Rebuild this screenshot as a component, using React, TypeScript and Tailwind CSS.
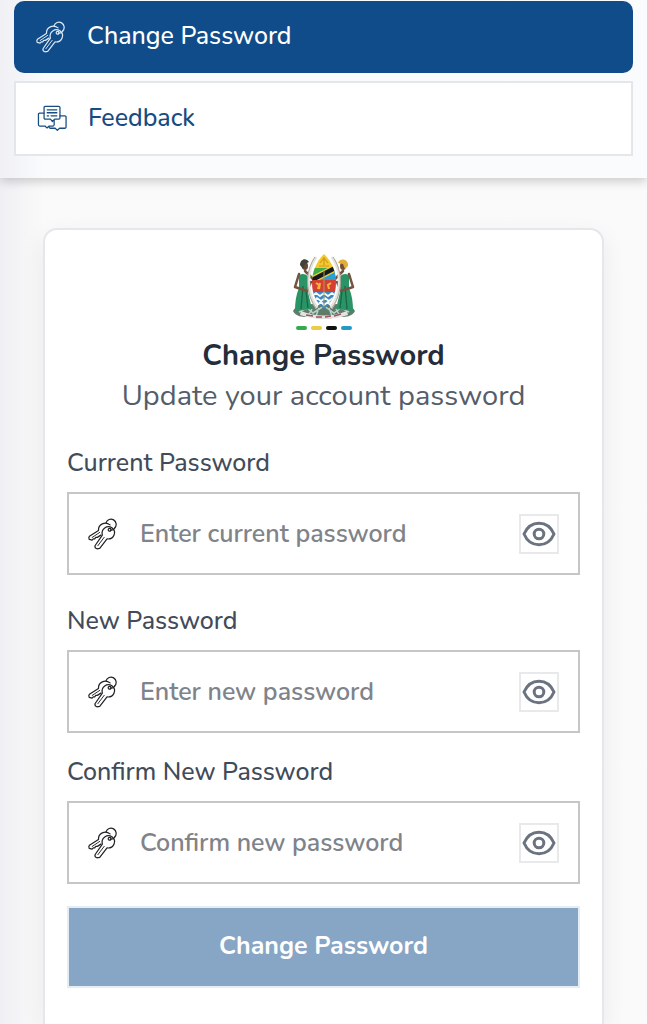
import { useState } from "react";

function KeysIcon({ className }: { className: string }) {
  return (
    <svg viewBox="0 0 34 34" className={className} fill="none" stroke="currentColor" strokeWidth="1.3" strokeLinecap="round" strokeLinejoin="round" aria-hidden="true">
      <path d="M20.200 5.200a5.500 5.500 0 1 1 9.200 5.400" />
      <path d="M24.500 7.300c-5.300-4-12.600-.8-12.300 6L2.600 19.400c-.8.800-.8 2.200-.2 3.400l3 .7 1.300-1.400 1.500.1 1.100-1.500 1.700-.1 3.700-2.400" />
      <path d="M13.500 15.300 5.500 20.700" strokeWidth="1" />
      <path d="M16.300 18.300c-1.700-6.600 5-11.300 10.500-7.700 5.300 4.500 1.300 12.600-5.500 11.600l-7.800 10-3 .5c-1.500-.5-2.300-1.600-2-3.200z" />
      <path d="m18.300 20.500-6.800 9" strokeWidth="1" />
      <path d="M22.500 12.300c.3-1.400 2.300-1.700 3-.5.6 1.500-.7 2.600-2 2.100-.7-.3-1.100-.9-1-1.600zM25 12.800c2.300.3 3.700-.7 4.300-2" />
    </svg>
  );
}

function FeedbackIcon() {
  return (
    <svg viewBox="0 0 32 28" className="w-[31px] shrink-0" fill="none" stroke="currentColor" strokeWidth="1.300" strokeLinejoin="round" strokeLinecap="round" aria-hidden="true">
      <path d="M8.500 1.500h14a1.200 1.200 0 0 1 1.200 1.200v10.600a1.200 1.200 0 0 1-1.200 1.200h-4.300L16 17l-2.200-2.500H8.500a1.200 1.200 0 0 1-1.200-1.200V2.700a1.200 1.200 0 0 1 1.200-1.200z" />
      <path d="M7.300 8.300H2.700a1.200 1.200 0 0 0-1.200 1.200v11a1.200 1.200 0 0 0 1.200 1.200h5.500l2.200 2 2.100-2h4a1.200 1.200 0 0 0 1.200-1.200V16" />
      <path d="M23.700 11.300h5.100a1.200 1.200 0 0 1 1.200 1.200v10.300a1.200 1.200 0 0 1-1.200 1.200h-5.500L21 26.200 18.800 24h-5a1.200 1.200 0 0 1-1.200-1.200" />
      <path d="M10.500 5h10M10.500 8h10M10.500 11.200h1.500M14.500 11.200h6" />
    </svg>
  );
}

function EyeIcon() {
  return (
    <svg viewBox="0 0 34 26" className="w-[34px] shrink-0" fill="none" stroke="currentColor" strokeWidth="3" aria-hidden="true">
      <path d="M2 13C5 6 10.500 2.200 17 2.200S29 6 32 13c-3 7-8.500 10.800-15 10.800S5 20 2 13z" strokeLinejoin="round" />
      <circle cx="17" cy="13" r="4.800" />
    </svg>
  );
}

function Emblem() {
  return (
    <svg viewBox="0 0 62 66" className="h-[66px] w-[62px]" role="img" aria-label="Coat of arms">
      <defs>
        <clipPath id="shield">
          <path d="M31 0C23 8 19 18 19 29c0 12 5 20 12 26 7-6 12-14 12-26C43 18 39 8 31 0z" />
        </clipPath>
      </defs>
      <path d="M0 57c3-6 10-7 14-4 4-5 7-3 10 0 3-5 11-5 14 0 3-3 6-5 10 0 4-3 11-2 14 4-3 6-12 7-17 5-9 4-19 4-28 0-5 2-14 1-17-5z" fill="#5e7c69" />
      <path d="m6 58 8-4 6 5 11-7 10 7 7-5 8 4M19 55l-4 7M43 55l4 7M26 54l-3 8M36 54l3 8" stroke="#b9d3cb" strokeWidth="1.500" fill="none" />
      <path d="M6 21c6-3 10 1 11 7l-2 10 4 17-17 2c0-9 1-16 4-23z" fill="#2b9466" />
      <path d="M56 21c-6-3-10 1-11 7l2 10-4 17 17 2c0-9-1-16-4-23z" fill="#2b9466" />
      <path d="m10 32-2 23M13 37l2 17M52 32l2 23M49 37l-2 17" stroke="#176747" strokeWidth="1.300" />
      <path d="M6 20 2 33l12 4 4-9M12 17l8 8M56 20l4 13-12 4-4-9M50 17l-8 8" stroke="#74533f" strokeWidth="2.500" fill="none" strokeLinecap="round" strokeLinejoin="round" />
      <ellipse cx="12" cy="12" rx="3" ry="4" fill="#634734" />
      <path d="M7 11c0-6 6-8 9-3l-4 2-2 5z" fill="#424039" />
      <ellipse cx="50" cy="12" rx="3" ry="4" fill="#765039" />
      <path d="M55 12c1-7-8-9-10-3l5 1 2 5z" fill="#e0af34" />
      <path d="M23 3C13 17 13 39 24 54M39 3c10 14 10 36-1 51" fill="none" stroke="#e5e4df" strokeWidth="3" />
      <path d="M22 3C12 17 12 39 23 54M40 3c10 14 10 36-1 51" fill="none" stroke="#8f887d" strokeWidth=".7" />
      <g clipPath="url(#shield)">
        <path d="M18 0h26v15H18z" fill="#f5c92d" />
        <path d="M18 14h26v13H18z" fill="#41ad48" />
        <path d="M44 14v13H21z" fill="#279fd7" />
        <path d="m17 27 27-14" stroke="#f4ce36" strokeWidth="7" />
        <path d="m17 27 27-14" stroke="#15191a" strokeWidth="4.500" />
        <path d="M18 26h26v12H18z" fill="#d64034" />
        <path d="M18 38h26v18H18z" fill="#3c88c1" />
        <path d="m19 42 4-3 4 3 4-3 4 3 4-3 4 3M20 47l4-3 4 3 4-3 4 3 4-3M24 51l4-3 3 3 4-3 3 3" stroke="#f5fbff" strokeWidth="1.800" fill="none" />
      </g>
      <path d="M31 3v8m-4-2 4-5 4 5M26 12h10" stroke="#d09927" strokeWidth="1.200" fill="none" />
      <path d="m23 29 3 2-1 4M38 29l-3 2 1 4M27 29l-1 6" stroke="#f3b63a" strokeWidth="2" fill="none" />
      <path d="M31 16v37" stroke="#a49a61" strokeWidth="1" />
      <path d="M8 57q23 9 46 0l1 4q-24 8-48 0z" fill="#e5e3df" />
      <path d="m13 61 7 1m3 1h6m3 0 6-1m3 0 7-2" stroke="#9b5360" strokeWidth="1.500" />
    </svg>
  );
}

function PasswordField({ id, label, placeholder, className }: { id: string; label: string; placeholder: string; className: string }) {
  const [visible, setVisible] = useState(false);
  return (
    <div className={className}>
      <label htmlFor={id} className="block text-[25px] leading-8 font-medium text-[#414b59]">{label}</label>
      <div className="mt-[13px] flex h-[83px] items-center border-2 border-[#c5c6c8] bg-white pr-[19px] pl-[18px]">
        <KeysIcon className="size-8 shrink-0 text-[#202124]" />
        <input
          id={id}
          type={visible ? "text" : "password"}
          placeholder={placeholder}
          className="ml-[21px] h-full min-w-0 flex-1 bg-transparent text-[25px] font-semibold text-[#374151] outline-none placeholder:text-[#808389]"
        />
        <button
          type="button"
          aria-label={visible ? "Hide password" : "Show password"}
          onClick={() => setVisible(!visible)}
          className="flex size-10 shrink-0 items-center justify-center border-2 border-[#e8e9eb] text-[#6b7280]"
        >
          <EyeIcon />
        </button>
      </div>
    </div>
  );
}

export default function App() {
  return (
    <div className="flex min-h-screen flex-col bg-[#fafafa] bg-linear-to-r from-[#f0f0f4] to-[#fafafa] to-[44px] font-['Nunito','Noto_Sans',sans-serif]">
      <nav className="flex flex-col gap-2 bg-[#f9fbfd] bg-linear-to-r from-[#f0f0f5] to-[#f9fbfd] to-[44px] px-[14px] pt-px pb-[22px] shadow-[0_3px_10px_rgba(0,0,0,0.2)]">
        <a href="#change-password" aria-current="page" className="flex h-[72px] items-center rounded-[10px] bg-[#104c8a] pl-[21px] text-[25px] font-medium text-white">
          <KeysIcon className="size-8 text-[#dce9f5]" />
          <span className="ml-5">Change Password</span>
        </a>
        <a href="#feedback" className="flex h-[75px] items-center border-2 border-[#e4e6e9] bg-white pl-[21px] text-[25px] font-medium text-[#174c82]">
          <FeedbackIcon />
          <span className="ml-5">Feedback</span>
        </a>
      </nav>
      <main className="flex flex-1 flex-col px-[43px] pt-[50px]">
        <section className="flex flex-1 flex-col rounded-t-[14px] border-2 border-b-0 border-[#e5e7ea] bg-white px-[22px] pt-6 pb-9 shadow-[0_8px_24px_rgba(0,0,0,0.07)]">
          <header className="flex flex-col items-center text-center">
            <Emblem />
            <div className="mt-1.5 flex gap-1">
              <span className="h-1 w-[11px] rounded-full bg-[#35ac4c]" />
              <span className="h-1 w-[11px] rounded-full bg-[#edcb45]" />
              <span className="h-1 w-[11px] rounded-full bg-[#111111]" />
              <span className="h-1 w-[11px] rounded-full bg-[#239bc9]" />
            </div>
            <h1 className="mt-2 text-[29px] leading-9 font-bold text-[#252d3a]">Change Password</h1>
            <p className="mt-0.5 text-[29px] leading-10 text-[#555d69]">Update your account password</p>
          </header>
          <form onSubmit={(event) => event.preventDefault()}>
            <PasswordField id="current-password" label="Current Password" placeholder="Enter current password" className="mt-[31px]" />
            <PasswordField id="new-password" label="New Password" placeholder="Enter new password" className="mt-[30px]" />
            <PasswordField id="confirm-password" label="Confirm New Password" placeholder="Confirm new password" className="mt-[23px]" />
            <button type="submit" className="mt-[22px] h-[82px] w-full border-2 border-[#e5edf4] bg-[#87a5c4] text-[25px] font-bold text-white">
              Change Password
            </button>
          </form>
        </section>
      </main>
    </div>
  );
}
